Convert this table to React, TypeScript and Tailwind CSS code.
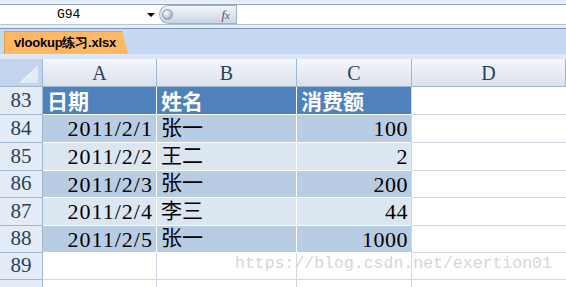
const rows = [
  { n: "84", date: "2011/2/1", name: "张一", amt: "100", dark: true, h: "h-[28px]" },
  { n: "85", date: "2011/2/2", name: "王二", amt: "2", dark: false, h: "h-[28px]" },
  { n: "86", date: "2011/2/3", name: "张一", amt: "200", dark: true, h: "h-[27px]" },
  { n: "87", date: "2011/2/4", name: "李三", amt: "44", dark: false, h: "h-[28px]" },
  { n: "88", date: "2011/2/5", name: "张一", amt: "1000", dark: true, h: "h-[27px]" },
];

const serif = "font-['Liberation_Serif','Noto_Sans_CJK_SC',serif]";
const cjk = "font-['Liberation_Serif','Noto_Sans_CJK_SC',sans-serif]";

function RowHead({ n, h }: { n: string; h: string }) {
  return (
    <div
      className={`${h} w-[43px] shrink-0 border-r border-b border-[#9eb6ce] bg-[#e4ecf7] flex items-center justify-center text-[21px] text-[#27415f] ${serif}`}
    >
      {n}
    </div>
  );
}

export default function App() {
  return (
    <div className="relative w-[566px] h-[287px] overflow-hidden bg-white">
      {/* top strip */}
      <div className="h-[4px] bg-gradient-to-b from-[#dfe8f5] to-[#f4f7fb]" />
      <div className="h-[1px] bg-[#8ea3bf]" />

      {/* name box + formula bar */}
      <div className="flex h-[19px] bg-white">
        <div className="relative w-[159px] flex items-center">
          <span className="ml-[57px] font-['Liberation_Mono',monospace] text-[13px] leading-none text-black">
            G94
          </span>
          <span className="absolute left-[147px] top-[8px] w-0 h-0 border-l-[4px] border-r-[4px] border-t-[4px] border-l-transparent border-r-transparent border-t-black" />
        </div>
        <div className="relative w-[77px] h-[19px] mt-[0px] rounded-l-full border border-r-0 border-[#9fb1c9] bg-gradient-to-b from-[#f2f5fa] via-[#dfe6f0] to-[#c9d4e4] flex items-center">
          <span className="ml-[2px] w-[11px] h-[11px] rounded-full bg-[radial-gradient(circle_at_35%_35%,#ffffff,#b8c0cc_60%,#8a94a3)] border border-[#8b97a8]" />
          <span className="ml-auto mr-[6px] font-['Liberation_Serif',serif] italic text-[13px] leading-none text-[#555]">
            f<span className="text-[11px]">x</span>
          </span>
        </div>
        <div className="w-[1px] bg-[#9fb1c9]" />
        <div className="flex-1" />
      </div>
      <div className="h-[1px] bg-[#b7c4d6]" />
      <div className="h-[3px] bg-[#e6edf7]" />
      <div className="h-[1px] bg-[#7f9abd]" />

      {/* sheet tab strip */}
      <div className="h-[25px] bg-[#c5d9f3] flex items-end pl-[4px]">
        <div className="h-[23px] w-[124px] bg-[#ffb861] border-t border-l border-[#e59a3c] [clip-path:polygon(0_0,118px_0,124px_100%,0_100%)] flex items-center pl-[9px]">
          <span className="font-['Liberation_Sans',sans-serif] font-bold text-[13px] text-black tracking-[-0.2px]">
            vlookup练习.xlsx
          </span>
        </div>
      </div>
      <div className="h-[5px] bg-[#dce8f8]" />

      {/* column headers */}
      <div className="flex h-[28px]">
        <div className="w-[43px] shrink-0 border-r border-b border-[#9eb6ce] bg-[#c3d5ee] relative">
          <div className="absolute right-[4px] bottom-[3px] w-0 h-0 border-l-[19px] border-t-[18px] border-l-transparent border-t-transparent border-b-0 border-r-0 [border-bottom-color:transparent] [border-right-color:transparent]" />
          <div className="absolute right-[4px] bottom-[3px] w-[19px] h-[18px] bg-gradient-to-br from-[#f4f7fb] to-[#dde6f2] [clip-path:polygon(100%_0,100%_100%,0_100%)]" />
        </div>
        {[
          { l: "A", w: "w-[114px]" },
          { l: "B", w: "w-[140px]" },
          { l: "C", w: "w-[115px]" },
          { l: "D", w: "flex-1" },
        ].map((c) => (
          <div
            key={c.l}
            className={`${c.w} shrink-0 border-r border-b border-[#9eb6ce] bg-gradient-to-b from-[#f5f7fb] to-[#dbe2ec] flex items-center justify-center text-[20px] text-[#27415f] ${serif}`}
          >
            {c.l}
          </div>
        ))}
      </div>

      {/* row 83 - table header */}
      <div className="flex h-[28px]">
        <RowHead n="83" h="h-[28px]" />
        <div className="w-[114px] shrink-0 border-r border-b border-white bg-[#4f81bd] flex items-center pl-[4px] text-[21px] text-white font-semibold font-['Noto_Sans_CJK_SC',sans-serif]">
          日期
        </div>
        <div className="w-[140px] shrink-0 border-r border-b border-white bg-[#4f81bd] flex items-center pl-[4px] text-[21px] text-white font-semibold font-['Noto_Sans_CJK_SC',sans-serif]">
          姓名
        </div>
        <div className="w-[114px] shrink-0 border-b border-white bg-[#4f81bd] flex items-center pl-[4px] text-[21px] text-white font-semibold font-['Noto_Sans_CJK_SC',sans-serif]">
          消费额
        </div>
        <div className="flex-1 border-l border-b border-[#d0d7e5]" />
      </div>

      {rows.map((r) => {
        const bg = r.dark ? "bg-[#b8cce4]" : "bg-[#dce6f1]";
        return (
          <div key={r.n} className={`flex ${r.h}`}>
            <RowHead n={r.n} h={r.h} />
            <div
              className={`w-[114px] shrink-0 border-r border-b border-white ${bg} flex items-center justify-end pr-[3px] text-[22px] tracking-[1px] text-black ${serif}`}
            >
              {r.date}
            </div>
            <div
              className={`w-[140px] shrink-0 border-r border-b border-white ${bg} flex items-center pl-[4px] text-[21px] text-black ${cjk}`}
            >
              {r.name}
            </div>
            <div
              className={`w-[114px] shrink-0 border-b border-white ${bg} flex items-center justify-end pr-[3px] text-[22px] tracking-[0.5px] text-black ${serif}`}
            >
              {r.amt}
            </div>
            <div className="flex-1 border-l border-b border-[#d0d7e5]" />
          </div>
        );
      })}

      {/* row 89 and below */}
      {["89", ""].map((n) => (
        <div key={n || "x"} className="flex h-[27px]">
          <RowHead n={n} h="h-[27px]" />
          <div className="w-[114px] shrink-0 border-r border-b border-[#d0d7e5]" />
          <div className="w-[140px] shrink-0 border-r border-b border-[#d0d7e5]" />
          <div className="w-[115px] shrink-0 border-r border-b border-[#d0d7e5]" />
          <div className="flex-1 border-b border-[#d0d7e5]" />
        </div>
      ))}

      {/* watermark */}
      <div className="absolute left-[235px] top-[256px] font-['Liberation_Mono',monospace] text-[16.5px] leading-none text-[#d6d6d6] pointer-events-none">
        https://blog.csdn.net/exertion01
      </div>
    </div>
  );
}
